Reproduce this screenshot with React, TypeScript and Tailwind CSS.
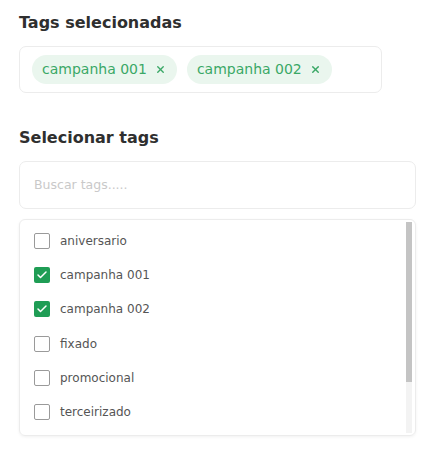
import { Check, X } from "lucide-react";

const tags = [
  { name: "aniversario", checked: false },
  { name: "campanha 001", checked: true },
  { name: "campanha 002", checked: true },
  { name: "fixado", checked: false },
  { name: "promocional", checked: false },
  { name: "terceirizado", checked: false },
];

export default function App() {
  const selected = tags.filter((t) => t.checked);

  return (
    <div className="w-[435px] h-[452px] bg-white px-[19px] pt-[12px] font-['DejaVu_Sans',sans-serif]">
      <h3 className="text-[16px] font-bold text-[#2f2f2f] leading-[22px]">Tags selecionadas</h3>

      <div className="mt-[12px] w-[363px] h-[47px] rounded-[7px] border border-[#ececec] flex items-center gap-[10px] px-[12px]">
        {selected.map((t) => (
          <span
            key={t.name}
            className="h-[29px] flex items-center gap-[8px] rounded-full bg-[#eaf6ee] pl-[10px] pr-[11px] text-[14px] text-[#3aa866]"
          >
            {t.name}
            <X size={11} strokeWidth={3} />
          </span>
        ))}
      </div>

      <h3 className="mt-[34px] text-[16px] font-bold text-[#2f2f2f] leading-[22px]">Selecionar tags</h3>

      <div className="mt-[12px] w-[397px] h-[48px] rounded-[7px] border border-[#ececec] flex items-center px-[14px]">
        <input
          placeholder="Buscar tags....."
          className="w-full outline-none text-[12.5px] text-[#555] placeholder:text-[#c9c9c9] bg-transparent"
        />
      </div>

      <div className="relative mt-[10px] w-[397px] h-[217px] rounded-[6px] border border-[#ececec] shadow-[0_1px_3px_rgba(0,0,0,0.06)] pt-[4px] pl-[14px]">
        <div className="flex flex-col">
          {tags.map((t) => (
            <label key={t.name} className="h-[34.2px] flex items-center gap-[10px]">
              {t.checked ? (
                <span className="w-[16px] h-[16px] rounded-[2px] bg-[#1f9d55] flex items-center justify-center">
                  <Check size={12} strokeWidth={3} className="text-white" />
                </span>
              ) : (
                <span className="w-[16px] h-[16px] rounded-[2px] border-[1.5px] border-[#9a9a9a]" />
              )}
              <span className="text-[12px] text-[#555]">{t.name}</span>
            </label>
          ))}
        </div>
        <div className="absolute right-[3px] top-[2px] bottom-[2px] w-[6px] bg-[#f3f3f3]">
          <div className="w-[6px] h-[160px] bg-[#c4c4c4]" />
        </div>
      </div>
    </div>
  );
}
